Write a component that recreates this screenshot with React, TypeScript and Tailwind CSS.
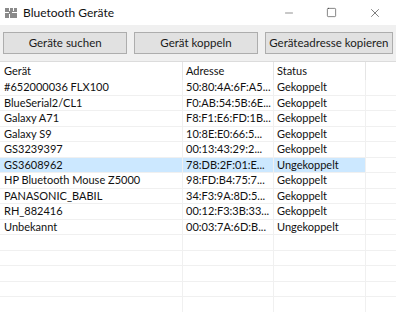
import { Minus, Square, X } from 'lucide-react';

const rows = [
  ['#652000036 FLX100', '50:80:4A:6F:A5...', 'Gekoppelt'],
  ['BlueSerial2/CL1', 'F0:AB:54:5B:6E...', 'Gekoppelt'],
  ['Galaxy A71', 'F8:F1:E6:FD:1B...', 'Gekoppelt'],
  ['Galaxy S9', '10:8E:E0:66:5...', 'Gekoppelt'],
  ['GS3239397', '00:13:43:29:2...', 'Gekoppelt'],
  ['GS3608962', '78:DB:2F:01:E...', 'Ungekoppelt'],
  ['HP Bluetooth Mouse Z5000', '98:FD:B4:75:7...', 'Gekoppelt'],
  ['PANASONIC_BABIL', '34:F3:9A:8D:5...', 'Gekoppelt'],
  ['RH_882416', '00:12:F3:3B:33...', 'Gekoppelt'],
  ['Unbekannt', '00:03:7A:6D:B...', 'Ungekoppelt'],
];

function AppIcon() {
  return (
    <svg width="12" height="10" viewBox="0 0 12 10" className="shrink-0">
      <rect x="0" y="0" width="12" height="10" fill="#8a8a8a" />
      <rect x="4" y="0" width="1" height="3" fill="#fff" />
      <rect x="0" y="4" width="4" height="1" fill="#fff" />
      <rect x="7" y="4" width="5" height="1" fill="#fff" />
      <rect x="4" y="6" width="1" height="4" fill="#fff" />
      <rect x="8" y="0" width="1" height="3" fill="#fff" />
    </svg>
  );
}

function Btn({ label, w }: { label: string; w: string }) {
  return (
    <button className={`${w} h-[22px] bg-[#e1e1e1] border border-[#adadad] text-[11.5px] text-[#1a1a1a] flex items-center justify-center whitespace-nowrap`}>
      {label}
    </button>
  );
}

export default function App() {
  return (
    <div className="w-[396px] h-[312px] overflow-hidden bg-white flex flex-col text-black" style={{ fontFamily: 'Lato, "Noto Sans", sans-serif' }}>
      <div className="h-[25px] flex items-center bg-white shrink-0">
        <div className="pl-[5px] flex items-center gap-[6px]">
          <AppIcon />
          <span className="text-[12px] text-[#111]">Bluetooth Geräte</span>
        </div>
        <div className="ml-auto flex items-center h-full">
          <div className="w-[43px] flex justify-center"><Minus size={12} strokeWidth={1} color="#222" /></div>
          <div className="w-[43px] flex justify-center"><Square size={11} strokeWidth={1.2} color="#222" /></div>
          <div className="w-[43px] flex justify-center"><X size={14} strokeWidth={1} color="#222" /></div>
        </div>
      </div>

      <div className="h-[37px] bg-[#f0f0f0] flex items-center gap-[7px] px-[3px] shrink-0 border-b border-[#dcdcdc]">
        <Btn label="Geräte suchen" w="w-[125px]" />
        <Btn label="Gerät koppeln" w="w-[124px]" />
        <Btn label="Geräteadresse kopieren" w="w-[129px]" />
      </div>

      <div className="flex-1 text-[11px] text-[#111]">
        <div className="flex h-[18px] items-center">
          <div className="w-[183px] h-full pl-[4px] flex items-center border-r border-[#e5e5e5]">Gerät</div>
          <div className="w-[91px] h-full pl-[3px] flex items-center border-r border-[#e5e5e5]">Adresse</div>
          <div className="w-[92px] h-full pl-[3px] flex items-center border-r border-[#e5e5e5]">Status</div>
        </div>
        {rows.map((r, i) => (
          <div key={i} className="flex h-[15.5px] items-center border-b border-[#f0f0f0]">
            <div className={`flex h-full ${i === 5 ? 'bg-[#cce8ff]' : ''}`}>
              <div className="w-[183px] pl-[4px] flex items-center border-r border-[#f0f0f0] whitespace-nowrap">{r[0]}</div>
              <div className="w-[91px] pl-[3px] flex items-center border-r border-[#f0f0f0] whitespace-nowrap">{r[1]}</div>
              <div className="w-[92px] pl-[3px] flex items-center border-r border-[#f0f0f0] whitespace-nowrap">{r[2]}</div>
            </div>
          </div>
        ))}
        {[0, 1, 2, 3, 4].map((i) => (
          <div key={i} className="flex h-[15.5px] border-b border-[#f0f0f0]">
            <div className="w-[183px] border-r border-[#f0f0f0]" />
            <div className="w-[91px] border-r border-[#f0f0f0]" />
            <div className="w-[92px] border-r border-[#f0f0f0]" />
          </div>
        ))}
      </div>
    </div>
  );
}
